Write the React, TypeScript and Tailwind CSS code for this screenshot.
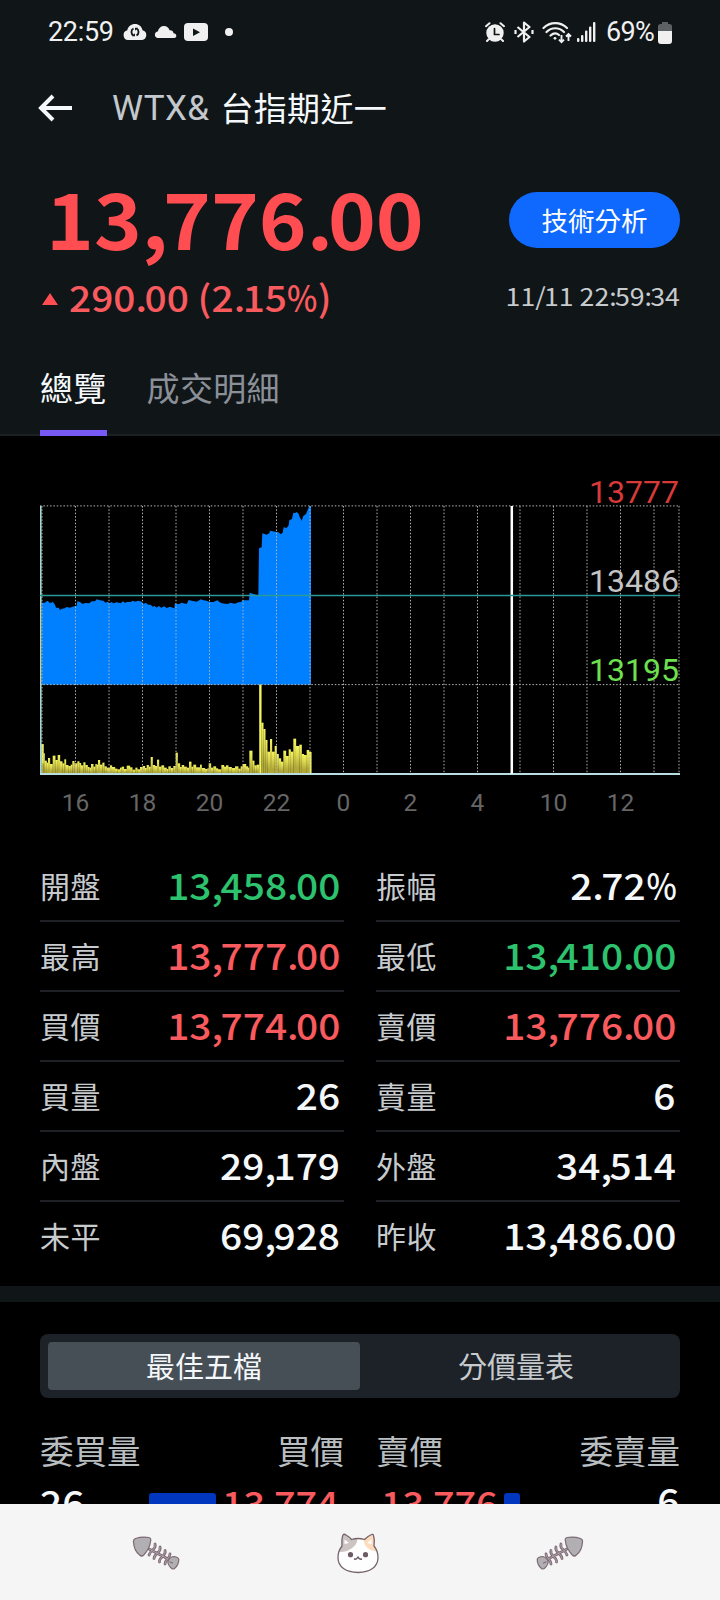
import clsx from 'clsx';

type Quote = { label: string; value: string; tone?: 'up' | 'down' };

const quotes: Quote[] = [
  { label: '開盤', value: '13,458.00', tone: 'down' },
  { label: '振幅', value: '2.72%' },
  { label: '最高', value: '13,777.00', tone: 'up' },
  { label: '最低', value: '13,410.00', tone: 'down' },
  { label: '買價', value: '13,774.00', tone: 'up' },
  { label: '賣價', value: '13,776.00', tone: 'up' },
  { label: '買量', value: '26' },
  { label: '賣量', value: '6' },
  { label: '內盤', value: '29,179' },
  { label: '外盤', value: '34,514' },
  { label: '未平', value: '69,928' },
  { label: '昨收', value: '13,486.00' },
];

const hourLines = [
  2, 35.5, 69, 102.5, 136, 169.5, 203, 236.5, 270, 303.5, 337, 370.5, 404, 437.5, 480, 513.5, 547, 580.5, 614, 639,
];

const hourLabels = [
  { x: 35.5, text: '16' },
  { x: 102.5, text: '18' },
  { x: 169.5, text: '20' },
  { x: 236.5, text: '22' },
  { x: 303.5, text: '0' },
  { x: 370.5, text: '2' },
  { x: 437.5, text: '4' },
  { x: 513.5, text: '10' },
  { x: 580.5, text: '12' },
];

// chart series, in thirds of a pixel
const price =
  '66,398 75,398 80,394 84,393 88,398 95,398 98,395 105,404 108,413 116,413 120,420 126,416 134,415 140,411 150,413 158,410 166,408 170,408 172,394 180,396 188,402 196,399 208,400 215,394 225,394 230,388 240,391 250,392 257,398 263,395 268,400 275,396 280,400 290,397 303,400 308,394 315,398 322,396 332,396 338,392 345,395 355,392 365,395 370,401 378,399 385,404 392,404 398,410 404,408 410,413 416,408 424,413 432,409 440,414 450,410 458,413 463,415 465,399 470,402 478,402 484,398 500,402 506,390 515,392 530,395 543,388 550,391 560,392 568,396 580,396 592,391 598,396 606,400 615,401 625,402 630,398 645,401 655,397 663,396 668,391 687,391 689,368 700,372 715,376 717,235 725,232 727,190 740,194 748,190 750,182 765,185 775,187 782,193 788,188 791,172 800,174 806,166 808,151 816,147 820,128 826,129 830,126 836,131 839,141 845,152 850,138 858,132 862,122 868,108 873,108';

const volume = [
  [64, 822], [70, 850], [74, 872], [80, 878], [84, 864], [90, 882], [98, 857], [106, 870], [113, 855], [120, 874],
  [127, 880], [133, 868], [138, 885], [145, 888], [152, 884], [157, 873], [163, 880], [172, 874], [178, 879],
  [183, 886], [190, 877], [196, 885], [203, 891], [208, 893], [213, 882], [220, 890], [226, 882], [230, 884],
  [234, 870], [240, 884], [247, 878], [253, 889], [260, 893], [270, 886], [276, 891], [285, 896], [292, 898],
  [300, 893], [305, 890], [312, 897], [320, 887], [330, 892], [337, 899], [346, 893], [352, 898], [360, 891],
  [368, 888], [375, 894], [380, 885], [386, 890], [392, 861], [398, 885], [405, 888], [411, 869], [417, 890],
  [424, 886], [432, 893], [440, 897], [445, 889], [452, 894], [460, 888], [467, 848], [473, 880], [480, 891],
  [485, 885], [492, 890], [500, 893], [507, 875], [514, 890], [520, 884], [528, 892], [540, 884], [545, 894],
  [555, 897], [562, 895], [566, 880], [573, 893], [580, 889], [588, 895], [594, 898], [604, 885], [612, 890],
  [618, 886], [625, 891], [635, 894], [645, 889], [655, 896], [662, 889], [668, 882], [678, 889], [684, 893],
  [688, 842], [697, 872], [703, 886], [710, 884], [718, 644], [724, 758], [730, 777], [736, 810], [742, 845],
  [750, 807], [756, 845], [764, 828], [770, 852], [776, 865], [783, 875], [790, 842], [798, 858], [806, 838],
  [812, 845], [820, 806], [828, 828], [838, 824], [845, 852], [852, 855], [860, 840], [867, 846], [873, 911],
];

const toneClass = (tone?: 'up' | 'down') =>
  tone === 'up' ? 'text-[#f95a5e]' : tone === 'down' ? 'text-[#2dc26e]' : 'text-[#f5f8fa]';

// wide digits, tight separators
const Num = ({ value, className }: { value: string; className?: string }) => (
  <span className={clsx('inline-block whitespace-pre', className)}>
    {value.split(/([.,:/%])/).map((part, i) => {
      if (part === '%') {
        return (
          <span key={i} className="-ml-[0.15em] inline-block origin-right scale-x-[0.83]">
            %
          </span>
        );
      }
      return i % 2 ? (
        <span key={i} className="tracking-[-0.065em]">
          {part}
        </span>
      ) : (
        part
      );
    })}
  </span>
);

const StatusBar = () => (
  <div className="flex h-16 items-center justify-between pl-12 pr-[48px] font-['Roboto',sans-serif] text-[27px] text-[#f0f0f0]">
    <div className="flex items-center">
      <span className="w-[75px] tracking-[-0.3px]">22:59</span>
      <svg width="24" height="18" viewBox="0 0 24 18">
        <path
          d="M5 17a5 5 0 0 1-.7-9.8C5 3.500 8.200 1 12 1s6.800 2.500 7.500 6.200A5 5 0 0 1 19 17z"
          fill="#f0f0f0"
        />
        <path d="M10.500 5.500a4 4 0 0 0 0 7M13.500 12.500a4 4 0 0 0 0-7" fill="none" stroke="#101518" strokeWidth="1.800" />
        <path d="M9 13.200h3v-3zM15 4.800h-3v3z" fill="#101518" />
      </svg>
      <svg className="ml-[7px]" width="23" height="14" viewBox="0 0 23 14">
        <path
          d="M3.500 13a3.300 3.300 0 0 1 .3-6.500C4.500 3 7 1 10 1c2.800 0 4.800 1.700 5.600 4.300 2.300-.2 3.700 1 3.900 3 1.700.1 2.800 1 2.800 2.400 0 1.300-.8 2.300-2.300 2.300z"
          fill="#f0f0f0"
        />
      </svg>
      <svg className="ml-[7px]" width="24" height="18" viewBox="0 0 24 18">
        <rect width="24" height="18" rx="4" fill="#f0f0f0" />
        <path d="M9 5.500v7.500l7-3.750z" fill="#101518" />
      </svg>
      <div className="ml-[17px] size-2 rounded-full bg-[#f0f0f0]" />
    </div>
    <div className="flex items-center">
      <svg width="20" height="20" viewBox="0 0 20 20" stroke="#f0f0f0" strokeLinecap="round">
        <circle cx="10" cy="11" r="8.700" fill="#f0f0f0" stroke="none" />
        <path d="M1 4.200L4.500 1.200M19 4.200L15.500 1.200M3.500 17.500L2 19M16.500 17.500L18 19" strokeWidth="2" fill="none" />
        <path d="M9.500 6.500v6h4.500" stroke="#101518" strokeWidth="1.700" fill="none" />
      </svg>
      <svg className="ml-[9px]" width="20" height="22" viewBox="0 0 20 22" fill="none" stroke="#f0f0f0" strokeWidth="2.200">
        <path d="M3.500 6l12 10L10 20.500V1.500L15.500 6l-12 10" strokeLinejoin="round" />
        <path d="M1.500 9v4M18.500 9v4" strokeWidth="2.200" />
      </svg>
      <svg className="ml-[8px]" width="30" height="23" viewBox="0 0 30 23" fill="none" stroke="#f0f0f0" strokeWidth="2.200">
        <path d="M1.500 7c6.500-6.500 17-6.500 23.500 0M4.500 11c5-5 12.500-5 17.500 0M8.500 14.500c3-2.700 6-2.700 8.500-.5" strokeLinecap="round" />
        <circle cx="13" cy="17.300" r="1.400" fill="#f0f0f0" stroke="none" />
        <path d="M19.500 14v7M17 18.700l2.500 2.500 2.500-2.500M26.500 20v-7M24 15.500l2.500-2.500 2.500 2.500" strokeWidth="1.900" />
      </svg>
      <svg className="ml-[5px]" width="19" height="20" viewBox="0 0 19 20" fill="#f0f0f0">
        <rect x="0" y="16" width="2.400" height="4" rx="1" />
        <rect x="4" y="13" width="2.400" height="7" rx="1" />
        <rect x="8" y="8.500" width="2.400" height="11.500" rx="1" />
        <rect x="12" y="4.500" width="2.400" height="15.500" rx="1" />
        <rect x="16" y="0" width="2.400" height="20" rx="1" />
      </svg>
      <span className="ml-[10px] w-[52px] whitespace-nowrap tracking-[-0.7px]">69%</span>
      <svg className="mt-[2px]" width="14" height="22" viewBox="0 0 14 22">
        <path d="M4 0h6v2h1.500Q14 2 14 4.500V9H0V4.500Q0 2 2.500 2H4z" fill="#5d6163" />
        <path d="M0 9h14v10q0 3-3 3H3q-3 0-3-3z" fill="#f0f0f0" />
      </svg>
    </div>
  </div>
);

const Chart = () => (
  <svg className="block font-['Roboto',sans-serif]" width="640" height="352" viewBox="0 -8 640 352">
    <defs>
      <linearGradient id="volume" x1="0" y1="0" x2="0" y2="1">
        <stop offset="0" stopColor="#f4f45e" />
        <stop offset="0.35" stopColor="#dcd850" />
        <stop offset="0.8" stopColor="#b0a838" />
      </linearGradient>
    </defs>
    <g transform="translate(-20 -6) scale(0.33333)">
      <polygon points={`66,644 ${price} 873,644`} fill="#0080ff" />
      {volume.slice(0, -1).map(([x, y], i) => (
        <rect key={x} x={x} y={y} width={volume[i + 1][0] - x + 0.5} height={911 - y} fill="url(#volume)" />
      ))}
      <path d="M721 644V911M872 846V911M68 822V880" stroke="#f4f45e" strokeWidth="5" />
    </g>
    <g stroke="#b4b4b4" strokeWidth="1" strokeDasharray="1.5 1.850">
      {hourLines.map((x) => (
        <path key={x} d={`M${x} 30V297`} />
      ))}
      <path d="M0 29.900H640M0 208.600H640" />
    </g>
    <path d="M.8 30v268" stroke="#aee3e0" strokeWidth="1.500" />
    <path d="M0 298H640" stroke="#b9dde0" strokeWidth="2" />
    <path d="M471.800 30V298" stroke="#fff" strokeWidth="2.500" />
    <path d="M0 119.500H640" stroke="#2b9a96" strokeWidth="1.300" />
    <g fontSize="32" textAnchor="end">
      <text x="639" y="26.500" fill="#d83a38">13777</text>
      <text x="639" y="116" fill="#c4c4c4">13486</text>
      <text x="639" y="205" fill="#6ee050">13195</text>
    </g>
    <g fontSize="24.500" textAnchor="middle" fill="#666">
      {hourLabels.map((h) => (
        <text key={h.text} x={h.x} y="334.700">
          {h.text}
        </text>
      ))}
    </g>
  </svg>
);

const FishBone = ({ flip = false }: { flip?: boolean }) => (
  <svg
    className={clsx('mt-0.5', flip && '-scale-x-100')}
    width="48"
    height="36"
    viewBox="0 0 48 36"
    stroke="#7d6a75"
    strokeWidth="1.200"
    strokeLinecap="round"
    strokeLinejoin="round"
  >
    <path d="M17 13l19 10M23 8q1 3-2 5.500t-4 5.500M28 11q1 3-2.500 6t-3.500 5.500M33 14.500q1 3-2.500 6t-3 5.500M38 18q0 2.500-2.500 5t-2.500 5" fill="none" strokeWidth="2.800" />
    <path d="M17 13l19 10M23 8q1 3-2 5.500t-4 5.500M28 11q1 3-2.500 6t-3.500 5.500M33 14.500q1 3-2.500 6t-3 5.500M38 18q0 2.500-2.500 5t-2.500 5" fill="none" stroke="#b9b0b6" strokeWidth="0.800" />
    <path d="M1.500 6Q1 3.500 3.500 2.500 10 .3 17 1.500q2.200.6 1.700 3-.8 8-7 14.500-2 2-4 0Q2 15 1.500 6z" fill="#b1afb2" />
    <path d="M36 25q2.500-4.500 6-4.500 4.500.8 4.800 2.800 0 6-4.500 9.500-1.800.8-3.800-1.500-3.200-3.500-2.500-6.300z" fill="#b1afb2" />
    <path d="M38 26l2.500 1" />
  </svg>
);

const Cat = () => (
  <svg className="-mt-px" width="42" height="41" viewBox="0 0 42 41" strokeLinecap="round" strokeLinejoin="round">
    <path
      d="M5 13Q4.500 5 6 2q1-1.500 3 0 3.500 2 5.500 4.500 6.500-2 13 0Q31 3 34.500 1.500q1.500-.7 2 1Q38 7 37 13q4 5 4 11.500C41 34 33 39.500 21 39.500S1 34 1 24.500Q1 18 5 13z"
      fill="#fffefe"
    />
    <path d="M5 13Q4.500 5 6 2q1-1.500 3 0 3.500 2 5.500 4.500 3-1 6-1 0 6-6 10-6 4.500-13 3Q2.500 16 5 13z" fill="#cbc4c2" />
    <path d="M26.500 6Q31 3 34.500 1.500q1.500-.7 2 1Q38 7 37 13q2 2 3 5-5 1-9.500-3-4-4-4-9z" fill="#fcdcbd" />
    <path d="M7.500 11V6.500l4.500 3.500zM34.500 11V6.500L30 10z" fill="#fff" />
    <path
      d="M5 13Q4.500 5 6 2q1-1.500 3 0 3.500 2 5.500 4.500 6.500-2 13 0Q31 3 34.500 1.500q1.500-.7 2 1Q38 7 37 13q4 5 4 11.500C41 34 33 39.500 21 39.500S1 34 1 24.500Q1 18 5 13z"
      fill="none"
      stroke="#75636c"
      strokeWidth="1.300"
    />
    <circle cx="13.500" cy="21.700" r="2.600" fill="#6b5c66" />
    <circle cx="28.500" cy="21.700" r="2.600" fill="#6b5c66" />
    <path d="M17.500 26q2 .8 3.500-2 1.500 2.800 3.500 2" fill="none" stroke="#6b5c66" strokeWidth="1.500" />
  </svg>
);

const App = () => {
  return (
    <div className="flex h-[1600px] w-[720px] flex-col overflow-hidden bg-black font-['Noto_Sans_CJK_TC',sans-serif]">
      <header className="flex h-[436px] flex-none flex-col border-b-2 border-[#1b2023] bg-[#101518]">
        <StatusBar />
        <div className="flex h-[88px] items-center pl-[38px] text-[33px] text-[#f5f8fa]">
          <svg width="35" height="28" viewBox="0 0 35 28" fill="none" stroke="#f5f8fa" strokeWidth="4">
            <path d="M34 14H3M15 2L3 14l12 12" />
          </svg>
          <span className="ml-[39px] mt-0.5 font-['Roboto',sans-serif] text-[35px] tracking-[0.4px] text-[#c3c8cc]">
            WTX&amp;
          </span>
          <span className="ml-[11px] tracking-[0.3px]">台指期近一</span>
        </div>
        <div className="flex h-[136px] items-center justify-between pl-[46px] pr-10">
          <Num
            value="13,776.00"
            className="mb-2 origin-left scale-x-[1.055] text-[77px] font-bold leading-none text-[#ff4d52]"
          />
          <button className="h-14 w-[171px] rounded-full bg-[#0f69ff] text-[26.500px] text-white">技術分析</button>
        </div>
        <div className="-mt-0.5 flex h-5 items-center justify-between pl-[42px] pr-10">
          <div className="flex items-center text-[36px] font-medium text-[#f95a5e]">
            <svg className="mr-[11px] mt-1.5" width="16" height="12" viewBox="0 0 16 12">
              <path d="M8 0l8 12H0z" fill="#ff4d52" />
            </svg>
            <Num value="290.00 (2.15%)" className="origin-left scale-x-[1.08]" />
          </div>
          <Num value="11/11 22:59:34" className="origin-right scale-x-[1.09] text-[24.500px] text-[#c7cbce]" />
        </div>
        <nav className="mt-auto flex gap-10 pl-10 text-[33px] tracking-[0.3px]">
          <div className="-mb-0.5 flex h-[92px] flex-col items-center justify-between border-b-[6px] border-[#7759f6] text-[#f5f8fa]">
            <span className="pt-[19px]">總覽</span>
          </div>
          <div className="pt-[19px] text-[#8b9098]">成交明細</div>
        </nav>
      </header>

      <section className="px-10 pt-8">
        <Chart />
      </section>

      <section className="mt-8 grid grid-cols-2 gap-x-8 px-10">
        {quotes.map((q, i) => (
          <div
            key={q.label}
            className={clsx(
              'flex h-[70px] items-center justify-between pr-1',
              i < quotes.length - 2 ? 'border-b-2 border-[#1d2125]' : 'pb-0.5',
            )}
          >
            <span className="mb-px text-[30px] tracking-[0.4px] text-[#c7cbce]">{q.label}</span>
            <Num
              value={q.value}
              className={clsx('mb-[5px] origin-right scale-x-[1.08] text-[36px] font-medium', toneClass(q.tone))}
            />
          </div>
        ))}
      </section>

      <div className="mt-[14px] h-4 flex-none bg-[#101518]" />

      <section className="flex min-h-0 flex-1 flex-col overflow-hidden px-10 pt-8">
        <div className="flex h-16 flex-none rounded-lg bg-[#1d2228] p-2 text-[29px]">
          <div className="flex flex-1 items-center justify-center rounded bg-[#464e56] text-[#f5f8fa]">最佳五檔</div>
          <div className="flex flex-1 items-center justify-center text-[#c7cbce]">分價量表</div>
        </div>
        <div className="mt-[28px] grid flex-none grid-cols-2 gap-x-8 text-[33.500px] leading-[48px] text-[#b9bec1]">
          <div className="flex justify-between">
            <span>委買量</span>
            <span>買價</span>
          </div>
          <div className="flex justify-between">
            <span>賣價</span>
            <span>委賣量</span>
          </div>
        </div>
        <div className="mt-px grid flex-none grid-cols-2 gap-x-8 text-[36px] font-medium leading-[52px] text-[#f5f8fa]">
          <div className="flex">
            <div className="w-[109px]">
              <Num value="26" className="-mt-0.5 origin-left scale-x-[1.08]" />
            </div>
            <span className="mt-[18px] h-9 w-[67px] rounded-[3px] bg-[#0037be]" />
            <Num value="13,774" className="ml-[6px] mt-px origin-left scale-x-[1.08] text-[35px] text-[#f95a5e]" />
          </div>
          <div className="flex">
            <div className="ml-[5px] mt-px w-[123px] text-[35px] text-[#f95a5e]">
              <Num value="13,776" className="origin-left scale-x-[1.08]" />
            </div>
            <span className="mt-[18px] h-9 w-4 rounded-[3px] bg-[#0037be]" />
            <Num value="6" className="-mt-0.5 ml-auto origin-right scale-x-[1.08]" />
          </div>
        </div>
      </section>

      <footer className="flex h-24 flex-none justify-between bg-[#f5f5f5] pl-[132px] pr-[136px] pt-[30px]">
        <FishBone />
        <Cat />
        <FishBone flip />
      </footer>
    </div>
  );
};

export default App;
